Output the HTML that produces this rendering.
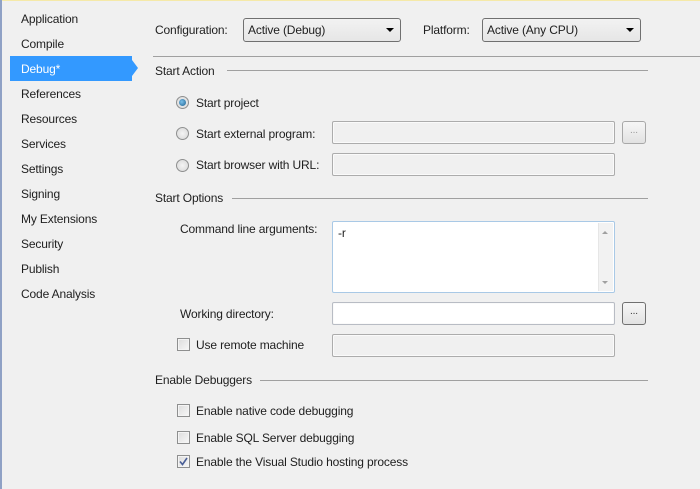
<!DOCTYPE html>
<html><head><style>
*{margin:0;padding:0;box-sizing:border-box}
body{width:700px;height:489px;background:#f0f0f0;font-family:"Liberation Sans",sans-serif;font-size:12px;color:#1e1e1e;position:relative;overflow:hidden;letter-spacing:-0.15px}
.a{position:absolute;white-space:nowrap;line-height:14px}
.nav{position:absolute;left:21px;line-height:14px}
.tb{position:absolute;border:1px solid #acacac;border-radius:2px;background:#f0f0f0;box-shadow:inset 0 0 0 1px #fafafa}
.tb.w{background:#fff;border-color:#b8bcc4}
.btn{position:absolute;width:24px;height:23px;border:1px solid #a8a8a8;border-radius:3px;background:linear-gradient(#f6f6f6,#e2e2e2);font-size:10px;text-align:center;line-height:18px;color:#999}
.dd{position:absolute;height:24px;border:1px solid #707070;border-radius:3px;background:linear-gradient(#f2f2f2,#e6e6e6);padding-left:4px;line-height:22px}
.dd:after{content:"";position:absolute;right:6px;top:9px;border-left:4px solid transparent;border-right:4px solid transparent;border-top:4px solid #000}
.hl{position:absolute;height:1px;background:#a0a0a0}
.rad{position:absolute;width:13px;height:13px;border-radius:50%;border:1px solid #8e8f8f;background:radial-gradient(#f4f4f4,#d6d6d6)}
.rad.on:after{content:"";position:absolute;left:2px;top:2px;width:7px;height:7px;border-radius:50%;background:radial-gradient(circle at 40% 40%,#7ac0ea,#1c5f8e)}
.cb{position:absolute;width:13px;height:13px;border:1px solid #8e8f8f;background:linear-gradient(135deg,#dcdcdc,#f8f8f8);box-shadow:inset 0 0 0 1px #f4f4f4}
</style></head><body>
<div style="position:absolute;left:0;top:0;width:700px;height:1px;background:#f5e9a8"></div>
<div style="position:absolute;left:0;top:0;width:2px;height:489px;background:#8fa1c5"></div>

<div class="nav" style="top:12px">Application</div>
<div class="nav" style="top:37px">Compile</div>
<div style="position:absolute;left:10px;top:56px;width:122px;height:25px;background:#3399ff"></div>
<div style="position:absolute;left:132px;top:60px;border-top:8px solid transparent;border-bottom:8px solid transparent;border-left:6px solid #3399ff"></div>
<div class="nav" style="top:62px;color:#fff">Debug*</div>
<div class="nav" style="top:87px">References</div>
<div class="nav" style="top:112px">Resources</div>
<div class="nav" style="top:137px">Services</div>
<div class="nav" style="top:162px">Settings</div>
<div class="nav" style="top:187px">Signing</div>
<div class="nav" style="top:212px">My Extensions</div>
<div class="nav" style="top:237px">Security</div>
<div class="nav" style="top:262px">Publish</div>
<div class="nav" style="top:287px">Code Analysis</div>

<div class="a" style="left:155px;top:23px">Configuration:</div>
<div class="dd" style="left:243px;top:18px;width:158px">Active (Debug)</div>
<div class="a" style="left:423px;top:23px">Platform:</div>
<div class="dd" style="left:482px;top:18px;width:159px">Active (Any CPU)</div>
<div class="hl" style="left:153px;top:56px;width:547px"></div>

<div class="a" style="left:155px;top:64px">Start Action</div>
<div class="hl" style="left:227px;top:70px;width:421px"></div>
<div class="rad on" style="left:176px;top:96px"></div>
<div class="a" style="left:196px;top:96px">Start project</div>
<div class="rad" style="left:176px;top:127px"></div>
<div class="a" style="left:196px;top:127px">Start external program:</div>
<div class="tb" style="left:332px;top:121px;width:283px;height:23px"></div>
<div class="btn" style="left:622px;top:121px">...</div>
<div class="rad" style="left:176px;top:159px"></div>
<div class="a" style="left:196px;top:158px">Start browser with URL:</div>
<div class="tb" style="left:332px;top:153px;width:283px;height:23px"></div>

<div class="a" style="left:155px;top:191px">Start Options</div>
<div class="hl" style="left:232px;top:198px;width:416px"></div>
<div class="a" style="left:180px;top:222px">Command line arguments:</div>
<div class="tb w" style="left:332px;top:221px;width:283px;height:72px;border-color:#a9c9e6;box-shadow:none"></div>
<div style="position:absolute;left:598px;top:223px;width:15px;height:68px;background:#f2f2f2;border-left:1px solid #e6e6e6"></div>
<div style="position:absolute;left:602px;top:231px;border-left:3px solid transparent;border-right:3px solid transparent;border-bottom:3px solid #a0a0a0"></div>
<div style="position:absolute;left:602px;top:281px;border-left:3px solid transparent;border-right:3px solid transparent;border-top:3px solid #a0a0a0"></div>
<div class="a" style="left:338px;top:226px">-r</div>
<div class="a" style="left:180px;top:307px">Working directory:</div>
<div class="tb w" style="left:332px;top:302px;width:283px;height:23px"></div>
<div class="btn" style="left:622px;top:302px;border-color:#707070;color:#333">...</div>
<div class="cb" style="left:177px;top:338px"></div>
<div class="a" style="left:196px;top:338px">Use remote machine</div>
<div class="tb" style="left:332px;top:334px;width:283px;height:23px"></div>

<div class="a" style="left:155px;top:373px">Enable Debuggers</div>
<div class="hl" style="left:260px;top:380px;width:388px"></div>
<div class="cb" style="left:177px;top:404px"></div>
<div class="a" style="left:196px;top:404px">Enable native code debugging</div>
<div class="cb" style="left:177px;top:431px"></div>
<div class="a" style="left:196px;top:431px">Enable SQL Server debugging</div>
<div class="cb" style="left:177px;top:455px"></div>
<svg style="position:absolute;left:177px;top:455px" width="13" height="13"><path d="M3 6.5 L5.5 9.5 L10 3" stroke="#4a5f97" stroke-width="1.6" fill="none"/></svg>
<div class="a" style="left:196px;top:455px">Enable the Visual Studio hosting process</div>
</body></html>
